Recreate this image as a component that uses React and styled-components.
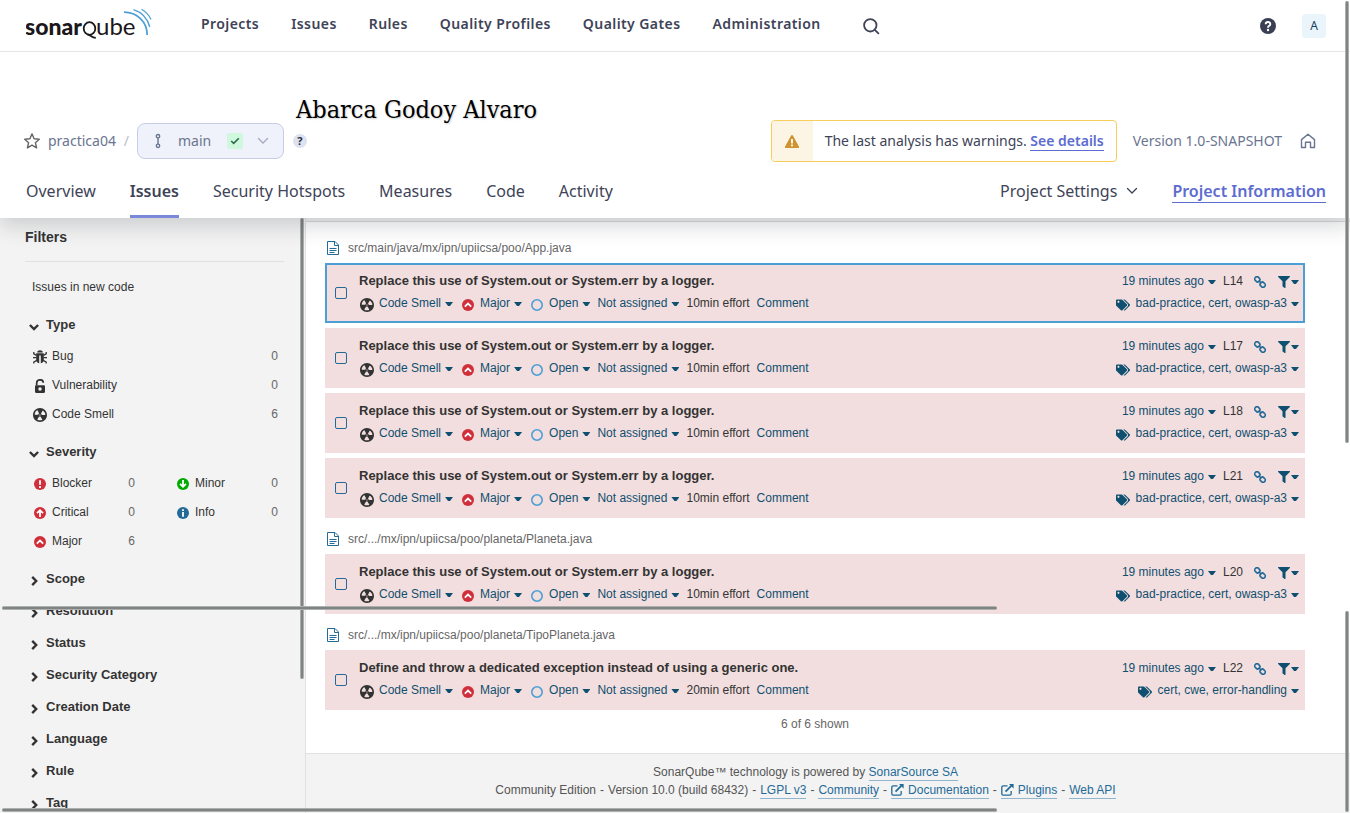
import React from "react";
import styled, { createGlobalStyle, css } from "styled-components";
import { FaFilter, FaTags } from "react-icons/fa";

const GlobalStyle = createGlobalStyle`
  * { box-sizing: border-box; }
  html, body { margin: 0; padding: 0; }
  body {
    background: #fff;
    color: #333;
    font-family: "Liberation Sans", Arial, sans-serif;
    font-size: 12px;
    line-height: 20px;
  }
  button { font: inherit; color: inherit; background: none; border: 0; padding: 0; cursor: pointer; }
  a { text-decoration: none; color: inherit; }
  svg { display: block; flex: none; }
`;

const Page = styled.div`
  position: relative;
  display: flex;
  flex-direction: column;
  height: 100vh;
  overflow: hidden;
`;

/* ---------- header ---------- */

const Header = styled.header`
  position: relative;
  z-index: 2;
  flex: none;
  background: #fff;
  color: #3e4357;
  font-family: "Noto Sans", sans-serif;
  font-size: 14px;
  box-shadow: 0 8px 20px 0 rgba(29, 33, 47, 0.18);
  clip-path: inset(0 0 -40px 0);
`;

const GlobalBar = styled.div`
  display: flex;
  align-items: center;
  height: 52px;
  padding: 0 24px 0 26px;
  border-bottom: 1px solid #e6e6e8;
`;

const GlobalNav = styled.nav`
  display: flex;
  gap: 32px;
  margin-left: 48px;
  padding-bottom: 4px;
`;

const GlobalLink = styled.a`
  font-weight: 600;
  letter-spacing: 0.03em;
`;

const IconButton = styled.button`
  display: flex;
  align-items: center;
  justify-content: center;
  margin-left: ${(p) => p.$left || 0}px;
`;

const Avatar = styled.button`
  width: 24px;
  height: 24px;
  margin-left: 26px;
  border-radius: 4px;
  background: #e9f4fb;
  color: #16425b;
  font-size: 12px;
  text-align: center;
`;

const Spacer = styled.div`
  flex: 1;
`;

const Author = styled.div`
  margin: 48px 0 0 296px;
  color: #000;
  font-family: "DejaVu Serif Condensed", "DejaVu Serif", serif;
  font-size: 25px;
  line-height: 20px;
  text-shadow: 1px 1px 2px rgba(0, 0, 0, 0.2);
  white-space: nowrap;
`;

const ProjectRow = styled.div`
  display: flex;
  align-items: center;
  height: 42px;
  padding: 0 34px 0 24px;
  color: #6a7590;
`;

const ProjectLink = styled.a`
  margin-left: 8px;
`;

const Slash = styled.span`
  width: 21px;
  color: #b9bdc9;
  text-align: center;
`;

const BranchButton = styled.button`
  display: flex;
  align-items: center;
  width: 147px;
  height: 36px;
  padding: 0 12px 0 16px;
  border: 1px solid #c5cde6;
  border-radius: 8px;
  background: #eff2fa;
`;

const BranchName = styled.span`
  width: 49px;
  margin-left: 16px;
  text-align: left;
`;

const Passed = styled.span`
  display: flex;
  align-items: center;
  justify-content: center;
  width: 16px;
  height: 16px;
  margin-right: 14px;
  border-radius: 2px;
  background: #d0f8dc;
`;

const HelpDot = styled.button`
  width: 14px;
  height: 14px;
  margin-left: 9px;
  border-radius: 50%;
  background: #dde2f1;
  color: #2a2f40;
  font-size: 11px;
  font-weight: 700;
  line-height: 14px;
  text-align: center;
`;

const Banner = styled.div`
  display: flex;
  height: 42px;
  border: 1px solid #f8cd5c;
  border-radius: 4px;
  overflow: hidden;
  color: #3e4357;
`;

const BannerIcon = styled.div`
  display: flex;
  align-items: center;
  justify-content: center;
  width: 41px;
  background: #fcf5e4;
`;

const BannerText = styled.div`
  padding: 10px 12px;
  white-space: nowrap;
`;

const AccentLink = styled.a`
  color: #5d6cd0;
  font-weight: 600;
  border-bottom: 1px solid #5d6cd0;
`;

const Version = styled.span`
  margin-left: 16px;
  white-space: nowrap;
`;

const TabsRow = styled.div`
  display: flex;
  align-items: stretch;
  height: 56px;
  padding: 0 24px 0 26px;
  font-size: 16px;
`;

const Tabs = styled.nav`
  display: flex;
  gap: 34px;
`;

const Tab = styled.a`
  padding-top: 16px;
  line-height: 26px;
  white-space: nowrap;
  border-bottom: 3px solid transparent;
  ${(p) =>
    p.$active &&
    css`
      font-weight: 600;
      border-color: #7b87d9;
    `}
`;

const SettingsButton = styled.button`
  display: flex;
  align-items: center;
  gap: 9px;
  height: 26px;
  margin: 16px 34px 0 0;
  white-space: nowrap;
`;

const InfoLink = styled(AccentLink)`
  height: 25px;
  margin-top: 16px;
  line-height: 26px;
  white-space: nowrap;
`;

/* ---------- filters ---------- */

const Body = styled.div`
  display: flex;
  flex: 1;
  min-height: 0;
`;

const Sidebar = styled.aside`
  flex: none;
  width: 306px;
  overflow: hidden;
  padding: 0 21px 0 25px;
  border-right: 1px solid #e1e1e1;
  background: #f3f3f3;
`;

const FiltersTitle = styled.h2`
  margin: 0;
  padding: 9px 0 14px;
  border-bottom: 1px solid #e1e1e1;
  font-size: 14px;
  line-height: 20px;
`;

const NewCode = styled.div`
  padding: 15px 7px 12px;
`;

const Facet = styled.section`
  padding-bottom: ${(p) => (p.$open ? 8 : 0)}px;
`;

const FacetTitle = styled.button`
  display: flex;
  align-items: center;
  width: 100%;
  height: 32px;
  font-size: 13px;
  font-weight: 700;
  svg {
    margin: 4px 7px 0 4px;
  }
`;

const FacetItems = styled.div`
  display: grid;
  grid-template-columns: ${(p) => (p.$columns === 2 ? "112px 112px" : "1fr")};
  justify-content: ${(p) => (p.$columns === 2 ? "space-between" : "stretch")};
  padding: 0 1px 0 3px;
`;

const FacetItem = styled.button`
  display: flex;
  align-items: center;
  height: 29px;
  padding: 0 5px;
  svg {
    margin: 2px 5px 0 0;
  }
`;

const Count = styled.span`
  margin-left: auto;
  color: #666;
`;

/* ---------- issues ---------- */

const Content = styled.main`
  display: flex;
  flex: 1;
  flex-direction: column;
  min-width: 0;
`;

const TopStrip = styled.div`
  flex: none;
  height: 4px;
  background: #f3f3f3;
  border-bottom: 1px solid #d9d9d9;
`;

const IssueList = styled.div`
  flex: 1;
  padding: 5px 45px 0 19px;
`;

const FilePath = styled.div`
  display: flex;
  align-items: center;
  gap: 9px;
  height: 36px;
  padding: 6px 0 0 2px;
  color: #666;
`;

const Cards = styled.div`
  display: flex;
  flex-direction: column;
  gap: 5px;
`;

const Card = styled.article`
  display: flex;
  align-items: center;
  height: 60px;
  padding: 0 4px 0 8px;
  border: 2px solid ${(p) => (p.$selected ? "#4b9fd5" : "#f2dede")};
  background: #f2dede;
`;

const Check = styled.input.attrs({ type: "checkbox" })`
  appearance: none;
  flex: none;
  width: 12px;
  height: 12px;
  margin: 0 12px 0 0;
  border: 1px solid #236a97;
  border-radius: 2px;
  background: transparent;
`;

const CardBody = styled.div`
  flex: 1;
  min-width: 0;
  padding-bottom: 2px;
`;

const CardRow = styled.div`
  display: flex;
  align-items: center;
  justify-content: space-between;
  height: 22px;
  white-space: nowrap;
`;

const Message = styled.h3`
  margin: 0;
  font-size: 13px;
  line-height: 20px;
`;

const Group = styled.div`
  display: flex;
  align-items: center;
  gap: 7px;
`;

const Caret = styled.span`
  width: 8px;
  height: 4px;
  margin: 2px 0 0 -1px;
  background: #0f4f70;
  clip-path: polygon(0 0, 100% 0, 62% 100%, 38% 100%);
`;

const Glyph = styled.span`
  display: flex;
  justify-content: center;
  width: 15px;
  margin-top: 3px;
`;

const Action = styled.button`
  display: flex;
  align-items: center;
  gap: ${(p) => (p.$tight ? 1 : 5)}px;
  color: #0f4f70;
  ${Glyph} {
    margin-top: ${(p) => (p.$tight ? 2 : 3)}px;
  }
`;

const LinkGlyph = styled.a`
  margin: 2px 3px 0 4px;
`;

const Shown = styled.div`
  padding-top: 4px;
  color: #666;
  text-align: center;
`;

const Footer = styled.footer`
  flex: none;
  height: 60px;
  padding: 9px 45px 0 0;
  border-top: 1px solid #e1e1e1;
  background: #f3f3f3;
  color: #555;
  line-height: 18px;
  text-align: center;
`;

const FooterLink = styled.a`
  display: inline-block;
  height: 18px;
  color: #236a97;
  border-bottom: 1px solid #91b5cb;
  svg {
    display: inline-block;
    margin-right: 4px;
    vertical-align: -2px;
  }
`;

const Dash = styled.span`
  margin: 0 4px;
  &::before {
    content: "-";
  }
`;

const Scroller = styled.div`
  position: absolute;
  z-index: 3;
  border-radius: 2px;
  background: #7f8382;
  border: solid #adb0af;
  ${(p) =>
    p.$axis === "x"
      ? css`height: 4px; border-width: 1px 0;`
      : css`width: 4px; border-width: 0 1px;`}
`;
const PageTrackTop = styled(Scroller)`top: 1px; right: 1px; height: 442px;`;
const PageTrackBottom = styled(Scroller)`top: 611px; right: 1px; bottom: 1px;`;
const FilterTrack = styled(Scroller)`top: 218px; left: 300px; height: 461px; z-index: 1;`;
const MiddleTrack = styled(Scroller)`top: 606px; left: 2px; width: 995px;`;
const BottomTrack = styled(Scroller)`bottom: 1px; left: 2px; width: 995px;`;

/* ---------- icons ---------- */

const Logo = () => (
  <svg width="127" height="36" viewBox="0 0 127 36" role="img" aria-label="sonarqube">
    <g fill="#1b171b" fontFamily="Lato, sans-serif">
      <text x="-1" y="27" fontWeight="900" fontSize="23">sonar</text>
      <text x="70" y="27" fontSize="24">ube</text>
    </g>
    <ellipse cx="63.500" cy="20.500" rx="5.800" ry="6.300" fill="none" stroke="#1b171b" strokeWidth="1.800" />
    <path d="M61.500 26.500c3 0 4 3.300 8.300 3.300" fill="none" stroke="#1b171b" strokeWidth="1.800" />
    <g fill="none" stroke="#4b9fd5">
      <path d="M98 4.200C111 4.200 121.200 14 121.200 27" strokeWidth="1.700" />
      <path d="M107.500 1.700C115.500 4.200 121.500 10.500 123.800 19" strokeWidth="1.300" />
      <path d="M115.500 1.200C120 3.800 123.200 7.200 125 11.500" strokeWidth="1.200" />
    </g>
  </svg>
);

const SearchIcon = () => (
  <svg width="18" height="18" viewBox="0 0 18 18" fill="none" stroke="#3e4357" strokeWidth="1.800">
    <circle cx="8.300" cy="8.300" r="6.200" />
    <path d="M12.800 12.800l3.600 3.600" strokeLinecap="round" />
  </svg>
);

const HelpIcon = () => (
  <svg width="16" height="16" viewBox="0 0 16 16">
    <circle cx="8" cy="8" r="8" fill="#3a3f54" />
    <path d="M5.700 6.300C5.700 3.300 10.300 3.300 10.300 6.200 10.300 7.800 8 7.900 8 9.700" fill="none" stroke="#fff" strokeWidth="1.900" />
    <circle cx="8" cy="12" r="1.200" fill="#fff" />
  </svg>
);

const StarIcon = () => (
  <svg width="16" height="16" viewBox="0 0 16 16" fill="none" stroke="#666" strokeWidth="1.400" strokeLinejoin="round">
    <path d="M8 .9l2.100 4.800 5.200.5-3.900 3.500 1.200 5.200L8 12.200l-4.600 2.700 1.200-5.200L.7 6.200l5.200-.5z" />
  </svg>
);

const BranchIcon = () => (
  <svg width="8" height="16" viewBox="0 0 8 16" fill="none" stroke="#6a7590" strokeWidth="1.400">
    <circle cx="4" cy="3.200" r="1.700" />
    <circle cx="4" cy="12.800" r="1.700" />
    <path d="M4 5v6" />
  </svg>
);

const CheckIcon = () => (
  <svg width="10" height="8" viewBox="0 0 10 8" fill="none" stroke="#2c6e49" strokeWidth="1.600">
    <path d="M1.200 4l2.500 2.400L8.800 1.200" />
  </svg>
);

const ChevronDown = ({ color }) => (
  <svg width="12" height="8" viewBox="0 0 12 8" fill="none" stroke={color} strokeWidth="1.300" strokeLinecap="round">
    <path d="M1.500 1.500L6 6l4.500-4.500" />
  </svg>
);

const HomeIcon = () => (
  <svg width="16" height="16" viewBox="0 0 16 16" fill="none" stroke="#6a7590" strokeWidth="1.400" strokeLinejoin="round">
    <path d="M1.500 6.600L8 1.200l6.500 5.400v7.900h-4V9.300h-5v5.200h-4z" />
  </svg>
);

const WarningIcon = () => (
  <svg width="14" height="13" viewBox="0 0 14 13">
    <path d="M7 0c.4 0 .7.200.9.500l6 11c.4.700 0 1.500-.8 1.500H.9c-.8 0-1.200-.8-.8-1.500l6-11C6.300.2 6.600 0 7 0z" fill="#cf9430" />
    <path d="M6.100 4h1.800v4.500H6.100zM6.100 9.500h1.800v1.700H6.100z" fill="#fff" />
  </svg>
);

const FacetChevron = ({ open }) => (
  <svg width="10" height="10" viewBox="0 0 10 10" fill="none" stroke="#333" strokeWidth="2.400">
    <path d={open ? "M.9 3L5 7l4.100-4" : "M3.200.9L7.200 5l-4 4.100"} />
  </svg>
);

const BugIcon = () => (
  <svg width="14" height="14" viewBox="0 0 14 14" fill="#333">
    <path d="M4.200 2.500C4.200-.4 9.800-.4 9.800 2.500z" />
    <path d="M3.200 3.300h7.600V11c-.6 1.300-1.700 2-3 2.300V5.500H6.200v7.800c-1.300-.3-2.400-1-3-2.300z" />
    <path d="M.8 1.900v2l2.700 1.400M13.200 1.900v2l-2.700 1.400M0 7.700h3.500M14 7.700h-3.500M.8 13.400v-1.200l3-2M13.200 13.400v-1.200l-3-2" fill="none" stroke="#333" strokeWidth="1.300" />
  </svg>
);

const LockIcon = () => (
  <svg width="14" height="14" viewBox="0 0 14 14">
    <path d="M3.700 6.500V4c0-4.200 6.400-4.200 6.600-.3" fill="none" stroke="#333" strokeWidth="1.700" />
    <path d="M3.200 6.200h7.600c.7 0 1.200.5 1.200 1.200v5.400c0 .7-.5 1.200-1.200 1.200H3.200c-.7 0-1.200-.5-1.200-1.200V7.400c0-.7.500-1.200 1.200-1.200z" fill="#333" />
    <circle cx="7" cy="10" r="1.700" fill="#f3f3f3" />
  </svg>
);

const SmellIcon = () => (
  <svg width="14" height="14" viewBox="2 2 12 12" fill="#333">
    <path d="M8 2C4.700 2 2 4.700 2 8s2.700 6 6 6 6-2.700 6-6-2.700-6-6-6zm-.5 5.500h.9v.9h-.9v-.9zm-3.800.2c-.1 0-.2-.1-.2-.2 0-.4.1-1.200.6-2S5.300 4.200 5.600 4c.2 0 .3 0 .3.1l1.300 2.300c0 .1 0 .2-.1.2-.1.2-.2.3-.3.5-.1.2-.2.4-.2.5 0 .1-.1.2-.2.2l-2.700-.1zM9.900 12c-.3.2-1.100.5-2 .5-.9 0-1.700-.3-2-.5-.1 0-.1-.2-.1-.3l1.300-2.300c0-.1.1-.1.2-.1.2.1.3.1.5.1s.4 0 .5-.1c.1 0 .2 0 .2.1l1.300 2.300c.2.200.2.300.1.300zm2.500-4.100L9.700 8c-.1 0-.2-.1-.2-.2 0-.2-.1-.4-.2-.5 0-.1-.2-.3-.3-.4-.1 0-.1-.1-.1-.2l1.300-2.300c.1-.1.2-.1.3-.1.3.2 1 .7 1.500 1.500s.6 1.600.6 2c0 0-.1.1-.2.1z" />
  </svg>
);

const severityMarks = {
  blocker: ["#d02f3a", "M6 2.200v4.600M6 8v2"],
  critical: ["#d02f3a", "M6 10V3.200M3 6.200l3-3 3 3"],
  major: ["#d02f3a", "M2.800 7.600L6 4.600l3.200 3"],
  minor: ["#00aa00", "M6 2v6.800M3 5.800l3 3 3-3"],
  info: ["#236a97", "M6 2.200v1.800M6 5v4.800"],
};

const SeverityIcon = ({ kind }) => (
  <svg width="14" height="12" viewBox="-1 0 14 12">
    <circle cx="6" cy="6" r="6" fill={severityMarks[kind][0]} />
    <path d={severityMarks[kind][1]} fill="none" stroke="#fff" strokeWidth="1.800" />
  </svg>
);

const OpenIcon = () => (
  <svg width="12" height="12" viewBox="0 0 12 12">
    <circle cx="6" cy="6" r="5.200" fill="none" stroke="#4b9fd5" strokeWidth="1.600" />
  </svg>
);

const FileIcon = () => (
  <svg width="12" height="14" viewBox="0 0 12 14" fill="none" stroke="#236a97">
    <path d="M.5.500h7.500l3.500 3.500v9.500H.5zM7.500.5v4h4M2.500 7.500h7M2.500 9.500h7M2.500 11.500h5" />
  </svg>
);

const ChainIcon = () => (
  <svg width="12" height="12" viewBox="0 0 12 12" fill="none" stroke="#236a97" strokeWidth="1.600">
    <rect x="-2.600" y="-2.200" width="5.200" height="4.400" rx="1.800" transform="translate(3.300 3.300) rotate(45)" />
    <rect x="-2.600" y="-2.200" width="5.200" height="4.400" rx="1.800" transform="translate(8.700 8.700) rotate(45)" />
    <path d="M4.800 4.800l2.500 2.500" />
  </svg>
);

const ExternalIcon = () => (
  <svg width="13" height="12" viewBox="0 0 13 12" fill="none" stroke="#236a97" strokeWidth="1.300">
    <path d="M6.500 1.800H2.200c-.8 0-1.400.6-1.400 1.400v6.600c0 .8.600 1.400 1.400 1.400h6.600c.8 0 1.400-.6 1.400-1.400V7" />
    <path d="M4.500 7.700l6-6" strokeWidth="1.700" />
    <path d="M8 0h4.600v4.600z" fill="#236a97" stroke="none" />
  </svg>
);

/* ---------- data ---------- */

const LOGGER = "Replace this use of System.out or System.err by a logger.";
const TAGS = "bad-practice, cert, owasp-a3";

const files = [
  {
    path: "src/main/java/mx/ipn/upiicsa/poo/App.java",
    issues: [14, 17, 18, 21].map((line) => ({ line, message: LOGGER, effort: "10min", tags: TAGS, selected: line === 14 })),
  },
  {
    path: "src/.../mx/ipn/upiicsa/poo/planeta/Planeta.java",
    issues: [{ line: 20, message: LOGGER, effort: "10min", tags: TAGS }],
  },
  {
    path: "src/.../mx/ipn/upiicsa/poo/planeta/TipoPlaneta.java",
    issues: [
      {
        line: 22,
        message: "Define and throw a dedicated exception instead of using a generic one.",
        effort: "20min",
        tags: "cert, cwe, error-handling",
      },
    ],
  },
];

const types = [
  ["Bug", 0, <BugIcon key="b" />],
  ["Vulnerability", 0, <LockIcon key="v" />],
  ["Code Smell", 6, <SmellIcon key="c" />],
];

const severities = [
  ["Blocker", 0, "blocker"],
  ["Minor", 0, "minor"],
  ["Critical", 0, "critical"],
  ["Info", 0, "info"],
  ["Major", 6, "major"],
];

const closedFacets = ["Scope", "Resolution", "Status", "Security Category", "Creation Date", "Language", "Rule", "Tag"];

function Issue({ issue }) {
  return (
    <Card $selected={issue.selected}>
      <Check aria-label={`Select issue on line ${issue.line}`} />
      <CardBody>
        <CardRow>
          <Message>{issue.message}</Message>
          <Group>
            <Action>19 minutes ago <Caret /></Action>
            <span>L{issue.line}</span>
            <LinkGlyph href="#" aria-label="Permalink"><ChainIcon /></LinkGlyph>
            <Action $tight aria-label="Filter similar issues"><Glyph><FaFilter size={12} /></Glyph><Caret /></Action>
          </Group>
        </CardRow>
        <CardRow>
          <Group>
            <Action><Glyph><SmellIcon /></Glyph>Code Smell <Caret /></Action>
            <Action><Glyph><SeverityIcon kind="major" /></Glyph>Major <Caret /></Action>
            <Action><Glyph><OpenIcon /></Glyph>Open <Caret /></Action>
            <Action>Not assigned <Caret /></Action>
            <span>{issue.effort} effort</span>
            <Action>Comment</Action>
          </Group>
          <Action><Glyph><FaTags size={14} /></Glyph>{issue.tags} <Caret /></Action>
        </CardRow>
      </CardBody>
    </Card>
  );
}

export default function App() {
  return (
    <Page>
      <GlobalStyle />
      <Header>
        <GlobalBar>
          <a href="#" aria-label="Home"><Logo /></a>
          <GlobalNav>
            {["Projects", "Issues", "Rules", "Quality Profiles", "Quality Gates", "Administration"].map((label) => (
              <GlobalLink key={label} href="#">{label}</GlobalLink>
            ))}
          </GlobalNav>
          <IconButton $left={41} aria-label="Search"><SearchIcon /></IconButton>
          <Spacer />
          <IconButton aria-label="Help"><HelpIcon /></IconButton>
          <Avatar>A</Avatar>
        </GlobalBar>
        <Author>Abarca Godoy Alvaro</Author>
        <ProjectRow>
          <IconButton aria-label="Favorite"><StarIcon /></IconButton>
          <ProjectLink href="#">practica04</ProjectLink>
          <Slash>/</Slash>
          <BranchButton>
            <BranchIcon />
            <BranchName>main</BranchName>
            <Passed><CheckIcon /></Passed>
            <ChevronDown color="#a3abc2" />
          </BranchButton>
          <HelpDot>?</HelpDot>
          <Spacer />
          <Banner>
            <BannerIcon><WarningIcon /></BannerIcon>
            <BannerText>The last analysis has warnings. <AccentLink href="#">See details</AccentLink></BannerText>
          </Banner>
          <Version>Version 1.0-SNAPSHOT</Version>
          <IconButton $left={18} aria-label="Set as homepage"><HomeIcon /></IconButton>
        </ProjectRow>
        <TabsRow>
          <Tabs>
            {["Overview", "Issues", "Security Hotspots", "Measures", "Code", "Activity"].map((label) => (
              <Tab key={label} href="#" $active={label === "Issues"}>{label}</Tab>
            ))}
          </Tabs>
          <Spacer />
          <SettingsButton>Project Settings <ChevronDown color="#3e4357" /></SettingsButton>
          <InfoLink href="#">Project Information</InfoLink>
        </TabsRow>
      </Header>

      <Body>
        <Sidebar>
          <FiltersTitle>Filters</FiltersTitle>
          <NewCode>Issues in new code</NewCode>
          <Facet $open>
            <FacetTitle><FacetChevron open />Type</FacetTitle>
            <FacetItems>
              {types.map(([label, count, icon]) => (
                <FacetItem key={label}>{icon}{label}<Count>{count}</Count></FacetItem>
              ))}
            </FacetItems>
          </Facet>
          <Facet $open>
            <FacetTitle><FacetChevron open />Severity</FacetTitle>
            <FacetItems $columns={2}>
              {severities.map(([label, count, kind]) => (
                <FacetItem key={label}><SeverityIcon kind={kind} />{label}<Count>{count}</Count></FacetItem>
              ))}
            </FacetItems>
          </Facet>
          {closedFacets.map((label) => (
            <Facet key={label}>
              <FacetTitle><FacetChevron />{label}</FacetTitle>
            </Facet>
          ))}
        </Sidebar>

        <Content>
          <TopStrip />
          <IssueList>
            {files.map((file) => (
              <section key={file.path}>
                <FilePath><FileIcon />{file.path}</FilePath>
                <Cards>
                  {file.issues.map((issue) => <Issue key={issue.line} issue={issue} />)}
                </Cards>
              </section>
            ))}
            <Shown>6 of 6 shown</Shown>
          </IssueList>
          <Footer>
            <div>SonarQube™ technology is powered by <FooterLink href="#">SonarSource SA</FooterLink></div>
            <div>
              Community Edition<Dash />Version 10.0 (build 68432)<Dash />
              <FooterLink href="#">LGPL v3</FooterLink><Dash />
              <FooterLink href="#">Community</FooterLink><Dash />
              <FooterLink href="#"><ExternalIcon />Documentation</FooterLink><Dash />
              <FooterLink href="#"><ExternalIcon />Plugins</FooterLink><Dash />
              <FooterLink href="#">Web API</FooterLink>
            </div>
          </Footer>
        </Content>
      </Body>

      <PageTrackTop />
      <PageTrackBottom />
      <FilterTrack />
      <MiddleTrack $axis="x" />
      <BottomTrack $axis="x" />
    </Page>
  );
}
